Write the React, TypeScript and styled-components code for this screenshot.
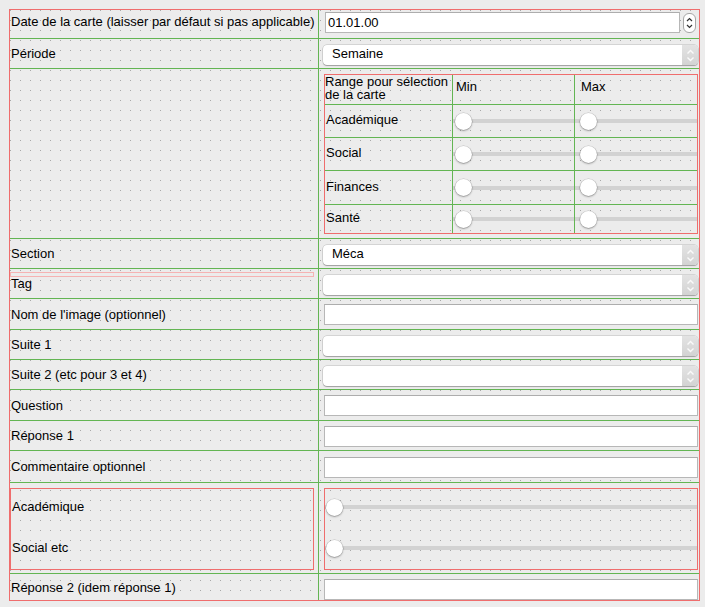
import React from 'react';
import styled, { createGlobalStyle } from 'styled-components';

const GREEN = '#63b553';
const RED = '#ef6d6d';

const GlobalStyle = createGlobalStyle`
  html, body {
    margin: 0;
    padding: 0;
    background: #ececec;
  }
  body {
    font-family: "Liberation Sans", Arial, sans-serif;
    font-size: 13px;
    color: #000;
  }
  * {
    box-sizing: border-box;
  }
`;

const Page = styled.div`
  padding: 9px;
`;

// Designer-style form: red frame, dotted 10px grid
const Form = styled.div`
  width: 691px;
  border: 1px solid ${RED};
  background-color: #ececec;
  background-image: conic-gradient(from 270deg at 1px 1px, #a8a8a8 90deg, transparent 0);
  background-size: 10px 10px;
`;

const Row = styled.div<{ $h: number }>`
  display: grid;
  grid-template-columns: 309px 1fr;
  height: ${(p) => p.$h}px;

  & + & {
    border-top: 1px solid ${GREEN};
  }
`;

const LabelCell = styled.div<{ $lift?: number; $marker?: boolean }>`
  position: relative;
  display: flex;
  align-items: center;
  padding: 0 0 ${(p) => p.$lift ?? 0}px 1px;
  border-right: 1px solid ${GREEN};
  white-space: nowrap;

  ${(p) =>
    p.$marker &&
    `
    &::before {
      content: '';
      position: absolute;
      top: 3px;
      left: 0;
      width: 302px;
      height: 3px;
      border: 1px solid #f5b3b3;
    }
  `}
`;

const GroupCell = styled.div`
  padding: 5px 4px 3px 0;
  border-right: 1px solid ${GREEN};
`;

const FieldCell = styled.div<{ $top?: number }>`
  display: flex;
  align-items: flex-start;
  padding: ${(p) => p.$top ?? 5}px 1px 0 5px;
`;

const LineEdit = styled.input`
  flex: 1;
  min-width: 0;
  height: 21px;
  margin: 0;
  padding: 0 2px;
  font: inherit;
  background: #fff;
  border: 1px solid #b7b7b7;
  border-top-color: #adadad;
  outline: none;
`;

const SpinInput = styled(LineEdit)`
  margin-left: 1px;
`;

const SpinButtons = styled.div`
  width: 13px;
  height: 20px;
  margin: 1px 2px 0 3px;
  border: 1px solid #a6a6a6;
  border-radius: 6px;
  background: #fff;
  display: flex;
  align-items: center;
  justify-content: center;
`;

const Combo = styled.div`
  flex: 1;
  display: flex;
  height: 20px;
  margin: 1px 0 0 -1px;
  background: #fff;
  border-radius: 4px;
  box-shadow: 0 0 0 0.5px rgba(0, 0, 0, 0.2), 0 1px 1px rgba(0, 0, 0, 0.25);
  overflow: hidden;
`;

const ComboText = styled.span`
  flex: 1;
  padding-left: 9px;
  line-height: 18px;
`;

const ComboArrows = styled.div`
  width: 16px;
  display: flex;
  align-items: center;
  justify-content: center;
  background: linear-gradient(#e3e3e3, #d3d3d3);
`;

const RangeBox = styled.div`
  flex: 1;
  height: 160px;
  border: 1px solid ${RED};
  display: grid;
  grid-template-columns: 128px 122px 1fr;
  grid-template-rows: 30px 33px 33px 34px 28px;
`;

const GridCell = styled.div`
  display: flex;
  align-items: center;
  border-right: 1px solid ${GREEN};
  border-bottom: 1px solid ${GREEN};

  &:nth-child(3n) {
    border-right: none;
  }
  &:nth-last-child(-n + 3) {
    border-bottom: none;
  }
`;

const GridLabel = styled(GridCell)`
  padding: 0 0 3px 1px;
`;

const GridHead = styled(GridCell)<{ $left: number; $top: number; $lh: number }>`
  align-items: flex-start;
  padding: ${(p) => p.$top}px 0 0 ${(p) => p.$left}px;
  line-height: ${(p) => p.$lh}px;
`;

const GroupBox = styled.div`
  flex: 1;
  height: 82px;
  border: 1px solid ${RED};
  display: flex;
  flex-direction: column;
  padding-top: 7px;
  gap: 19px;
`;

const GroupLabel = styled.div`
  height: 22px;
  line-height: 22px;
  padding-left: 1px;
`;

const Slider = styled.div<{ $inset: number }>`
  flex: none;
  width: 100%;
  height: 22px;
  display: flex;
  align-items: center;
  padding-left: ${(p) => p.$inset}px;
  background: linear-gradient(#d2d2d2, #d2d2d2) center / 100% 4px no-repeat;
`;

const Handle = styled.div`
  width: 17px;
  height: 17px;
  border-radius: 50%;
  background: #fff;
  box-shadow: 0 0 0 0.5px rgba(0, 0, 0, 0.18), 0 1px 2px rgba(0, 0, 0, 0.3);
`;

const Chevrons: React.FC<{ color: string; size: 'small' | 'large' }> = ({ color, size }) =>
  size === 'large' ? (
    <svg width="9" height="15" viewBox="0 0 9 15">
      <path d="M1.5 5.5 L4.5 2.5 L7.5 5.5" fill="none" stroke={color} strokeWidth="1.4" />
      <path d="M1.5 9.5 L4.5 12.5 L7.5 9.5" fill="none" stroke={color} strokeWidth="1.4" />
    </svg>
  ) : (
    <svg width="7" height="14" viewBox="0 0 7 14">
      <path d="M1 5 L3.5 2.5 L6 5" fill="none" stroke={color} strokeWidth="1.2" />
      <path d="M1 9 L3.5 11.5 L6 9" fill="none" stroke={color} strokeWidth="1.2" />
    </svg>
  );

const ComboBox: React.FC<{ value?: string }> = ({ value }) => (
  <Combo>
    <ComboText>{value}</ComboText>
    <ComboArrows>
      <Chevrons color="#fafafa" size="large" />
    </ComboArrows>
  </Combo>
);

const RangeSlider: React.FC<{ inset: number }> = ({ inset }) => (
  <Slider $inset={inset}>
    <Handle />
  </Slider>
);

const rangeRows = ['Académique', 'Social', 'Finances', 'Santé'];

const App: React.FC = () => {
  return (
    <>
      <GlobalStyle />
      <Page>
        <Form>
          <Row $h={28}>
            <LabelCell $lift={6}>Date de la carte (laisser par défaut si pas applicable)</LabelCell>
            <FieldCell $top={2}>
              <SpinInput readOnly value="01.01.00" />
              <SpinButtons>
                <Chevrons color="#333" size="small" />
              </SpinButtons>
            </FieldCell>
          </Row>
          <Row $h={30}>
            <LabelCell>Période</LabelCell>
            <FieldCell>
              <ComboBox value="Semaine" />
            </FieldCell>
          </Row>
          <Row $h={170}>
            <LabelCell />
            <FieldCell>
              <RangeBox>
                <GridHead $left={0} $top={0} $lh={13}>
                  Range pour sélection
                  <br />
                  de la carte
                </GridHead>
                <GridHead $left={3} $top={4} $lh={15}>Min</GridHead>
                <GridHead $left={6} $top={4} $lh={15}>Max</GridHead>
                {rangeRows.map((name) => (
                  <React.Fragment key={name}>
                    <GridLabel>{name}</GridLabel>
                    <GridCell>
                      <RangeSlider inset={2} />
                    </GridCell>
                    <GridCell>
                      <RangeSlider inset={5} />
                    </GridCell>
                  </React.Fragment>
                ))}
              </RangeBox>
            </FieldCell>
          </Row>
          <Row $h={30}>
            <LabelCell>Section</LabelCell>
            <FieldCell>
              <ComboBox value="Méca" />
            </FieldCell>
          </Row>
          <Row $h={30}>
            <LabelCell $marker>Tag</LabelCell>
            <FieldCell>
              <ComboBox />
            </FieldCell>
          </Row>
          <Row $h={31}>
            <LabelCell>Nom de l'image (optionnel)</LabelCell>
            <FieldCell>
              <LineEdit readOnly />
            </FieldCell>
          </Row>
          <Row $h={30}>
            <LabelCell>Suite 1</LabelCell>
            <FieldCell>
              <ComboBox />
            </FieldCell>
          </Row>
          <Row $h={30}>
            <LabelCell>Suite 2 (etc pour 3 et 4)</LabelCell>
            <FieldCell>
              <ComboBox />
            </FieldCell>
          </Row>
          <Row $h={31}>
            <LabelCell>Question</LabelCell>
            <FieldCell>
              <LineEdit readOnly />
            </FieldCell>
          </Row>
          <Row $h={30}>
            <LabelCell>Réponse 1</LabelCell>
            <FieldCell>
              <LineEdit readOnly />
            </FieldCell>
          </Row>
          <Row $h={32}>
            <LabelCell>Commentaire optionnel</LabelCell>
            <FieldCell $top={6}>
              <LineEdit readOnly />
            </FieldCell>
          </Row>
          <Row $h={91}>
            <GroupCell>
              <GroupBox>
                <GroupLabel>Académique</GroupLabel>
                <GroupLabel>Social etc</GroupLabel>
              </GroupBox>
            </GroupCell>
            <FieldCell>
              <GroupBox>
                <RangeSlider inset={1} />
                <RangeSlider inset={1} />
              </GroupBox>
            </FieldCell>
          </Row>
          <Row $h={27}>
            <LabelCell>Réponse 2 (idem réponse 1)</LabelCell>
            <FieldCell>
              <LineEdit readOnly />
            </FieldCell>
          </Row>
        </Form>
      </Page>
    </>
  );
};

export default App;
